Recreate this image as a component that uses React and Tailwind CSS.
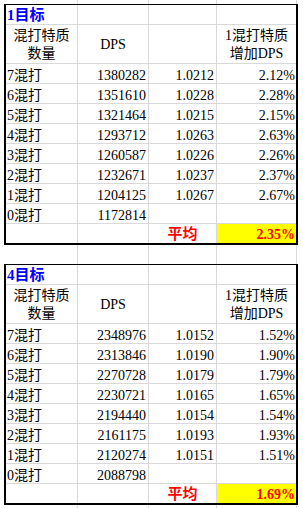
import React from "react";

const t1 = [
  ["7混打", "1380282", "1.0212", "2.12%"],
  ["6混打", "1351610", "1.0228", "2.28%"],
  ["5混打", "1321464", "1.0215", "2.15%"],
  ["4混打", "1293712", "1.0263", "2.63%"],
  ["3混打", "1260587", "1.0226", "2.26%"],
  ["2混打", "1232671", "1.0237", "2.37%"],
  ["1混打", "1204125", "1.0267", "2.67%"],
  ["0混打", "1172814", "", ""],
];
const t2 = [
  ["7混打", "2348976", "1.0152", "1.52%"],
  ["6混打", "2313846", "1.0190", "1.90%"],
  ["5混打", "2270728", "1.0179", "1.79%"],
  ["4混打", "2230721", "1.0165", "1.65%"],
  ["3混打", "2194440", "1.0154", "1.54%"],
  ["2混打", "2161175", "1.0193", "1.93%"],
  ["1混打", "2120274", "1.0151", "1.51%"],
  ["0混打", "2088798", "", ""],
];

const G = "border-[#d9d9d9]";

function Gap({ h }) {
  return (
    <div className={`flex ${h}`}>
      <div className={`w-[78px] border-r ${G}`} />
      <div className={`w-[71px] border-r ${G}`} />
      <div className={`w-[68px] border-r ${G}`} />
      <div className={`w-[80px] border-r ${G}`} />
    </div>
  );
}

function Table({ title, rows, avg }) {
  return (
    <div className="ml-[4px] w-[294px] border-l-2 border-r-2 border-t border-b-2 border-black">
      <div className="grid grid-cols-[72px_71px_68px_79px] h-[20px]">
        <div className={`border-b border-r ${G} pl-[1px] pt-[2px] leading-[17px] text-[15px] font-bold text-[#0000ff]`}>
          {title}
        </div>
        <div className={`border-b border-r ${G}`} />
        <div className={`border-b border-r ${G}`} />
        <div className={`border-b ${G}`} />
      </div>
      <div className="grid grid-cols-[72px_71px_68px_79px] h-[39px] text-[14px] leading-[18px]">
        <div className={`border-b border-r ${G} flex flex-col items-center justify-center pt-[2px] text-center`}>
          <span>混打特质</span>
          <span>数量</span>
        </div>
        <div className={`border-b border-r ${G} flex items-center justify-center pt-[2px]`}>DPS</div>
        <div className={`border-b border-r ${G}`} />
        <div className={`border-b ${G} flex flex-col items-center justify-center pt-[2px] text-center`}>
          <span>1混打特质</span>
          <span>增加DPS</span>
        </div>
      </div>
      {rows.map((r) => (
        <div key={r[0]} className="grid grid-cols-[72px_71px_68px_79px] h-[20px] text-[14px] leading-[15px]">
          <div className={`border-b border-r ${G} pl-[1px] pt-[4px]`}>{r[0]}</div>
          <div className={`border-b border-r ${G} pr-[2px] pt-[4px] text-right`}>{r[1]}</div>
          <div className={`border-b border-r ${G} pr-[2px] pt-[4px] text-right`}>{r[2]}</div>
          <div className={`border-b ${G} pr-[1px] pt-[4px] text-right`}>{r[3]}</div>
        </div>
      ))}
      <div className="grid grid-cols-[72px_71px_68px_79px] h-[19px] leading-[15px]">
        <div className={`border-r ${G}`} />
        <div className={`border-r ${G}`} />
        <div className={`border-r ${G} pt-[3px] text-center text-[15px] font-bold text-[#ff0000]`}>平均</div>
        <div className="bg-[#ffff00] pr-[1px] pt-[3px] text-right text-[14px] font-bold text-[#ff0000]">{avg}</div>
      </div>
    </div>
  );
}

export default function App() {
  return (
    <div className="w-[303px] h-[508px] overflow-hidden bg-white text-black font-['Liberation_Serif','Noto_Sans_CJK_SC',serif]">
      <Gap h="h-[4px]" />
      <Table title="1目标" rows={t1} avg="2.35%" />
      <Gap h="h-[19px]" />
      <Table title="4目标" rows={t2} avg="1.69%" />
      <Gap h="h-[10px]" />
    </div>
  );
}
